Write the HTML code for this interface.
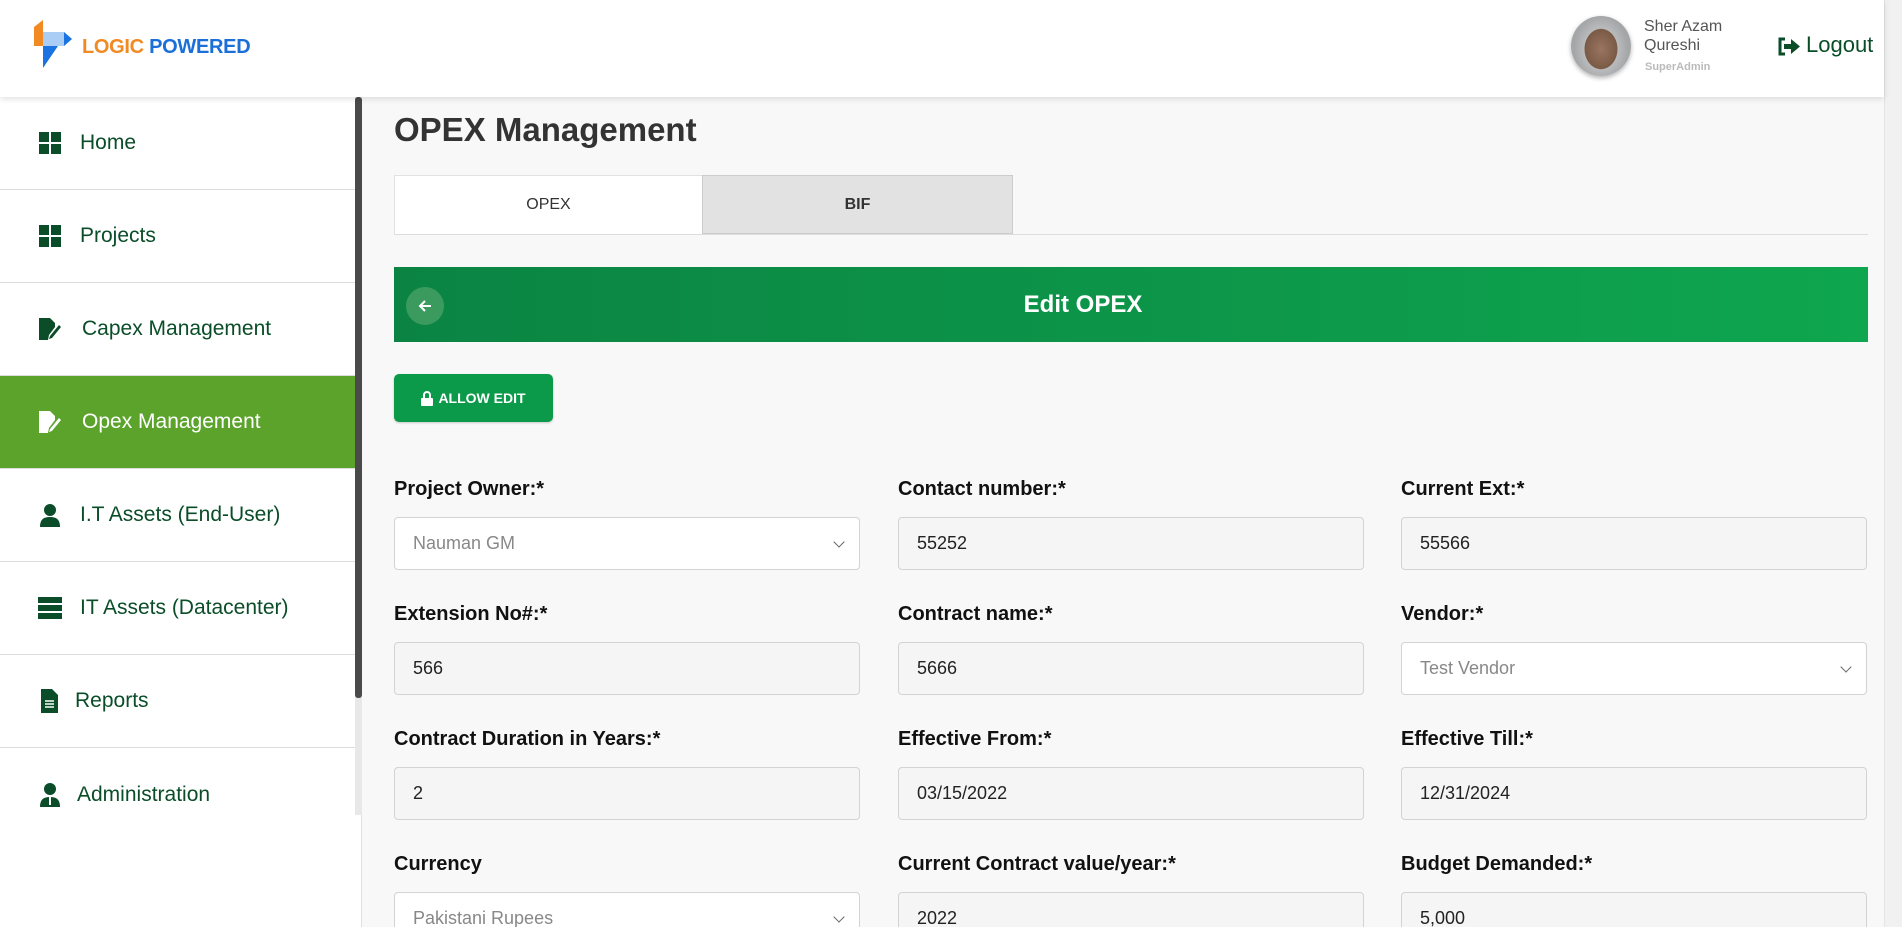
<!DOCTYPE html>
<html><head><meta charset="utf-8"><style>
*{box-sizing:border-box;margin:0;padding:0}
html,body{width:1902px;height:927px;overflow:hidden}
body{background:#f8f8f8;font-family:"Liberation Sans",sans-serif;position:relative}
.hdr{position:absolute;left:0;top:0;width:1884px;height:97px;background:#fff;box-shadow:0 2px 6px rgba(0,0,0,.12);z-index:2}
.vs{position:absolute;right:0;top:0;width:18px;height:927px;background:#f1f1f1;border-left:1px solid #e4e4e4}
.side{position:absolute;left:0;top:97px;width:362px;height:830px;background:#fff;border-right:1px solid #e0e0e0}
.item{position:absolute;left:0;width:355px;height:93px;border-bottom:1px solid #dcdcdc;color:#0a4d28;font-size:21px;display:flex;align-items:center}
.item .ic{position:absolute;left:38px;width:24px;height:24px}
.item span{position:absolute;left:80px}
.item.act{background:#5ba32b;color:#fff}
.sb{position:absolute;left:355px;top:97px;width:7px;height:718px;background:#e8e8e8}
.sbt{position:absolute;left:355px;top:97px;width:7px;height:601px;background:#4a4a4a;border-radius:3px}
h1{position:absolute;left:394px;top:111px;font-size:33px;font-weight:bold;color:#333}
.tabs{position:absolute;left:394px;top:175px;width:1474px;height:60px;border-bottom:1px solid #ddd}
.tab{position:absolute;top:0;height:59px;width:309px;font-size:16px;display:flex;align-items:center;justify-content:center;color:#333}
.ban{position:absolute;left:394px;top:267px;width:1474px;height:75px;background:linear-gradient(90deg,#0b8443,#0ea64f);color:#fff;font-size:24px;font-weight:bold;display:flex;align-items:center;justify-content:center;padding-right:96px}
.back{position:absolute;left:12px;top:20px;width:38px;height:38px;border-radius:50%;background:#3b9b5f;display:flex;align-items:center;justify-content:center}
.btn{position:absolute;left:394px;top:374px;width:159px;height:48px;background:#0b9a4a;border-radius:5px;color:#fff;font-size:14px;font-weight:bold;display:flex;align-items:center;justify-content:center;box-shadow:0 1px 2px rgba(0,0,0,.2)}
.lb{position:absolute;font-size:20px;color:#111;font-weight:600}
.in{position:absolute;width:466px;height:53px;border:1px solid #d3d3d3;border-radius:4px;background:#f5f5f5;font-size:18px;color:#222;padding-left:18px;display:flex;align-items:center}
.in.sel{background:#fff;color:#888}
.in.sel:after{content:"";position:absolute;right:16px;top:20px;width:7px;height:7px;border-right:1.5px solid #666;border-bottom:1.5px solid #666;transform:rotate(45deg)}
</style></head><body>
<div class="hdr">
 <svg style="position:absolute;left:34px;top:20px" width="40" height="50" viewBox="0 0 40 50"><path d="M0 7 L9 0 L9 26 L0 26Z" fill="#f28a24"/><path d="M9 12 L30 12 L38 19 L30 26 L9 26Z" fill="#a9cdf4"/><path d="M9 26 L24 26 L9 48Z" fill="#1a73e0"/><path d="M30 12 L38 19 L30 26Z" fill="#1a73e0"/></svg>
 <div style="position:absolute;left:82px;top:36px;font-size:20px;font-weight:bold;letter-spacing:-.3px"><span style="color:#f28a24">LOGIC</span> <span style="color:#1a6fd8">POWERED</span></div>
 <div style="position:absolute;left:1571px;top:16px;width:60px;height:60px;border-radius:50%;background:radial-gradient(ellipse 45% 55% at 50% 55%,#9a7560 0,#7a5a46 60%,#b9bbbd 62%,#a4a6a8 100%);box-shadow:0 2px 5px rgba(0,0,0,.3)"></div>
 <div style="position:absolute;left:1644px;top:17px;font-size:16px;color:#555;line-height:19px">Sher Azam<br>Qureshi</div>
 <div style="position:absolute;left:1645px;top:61px;font-size:11px;color:#bbb;font-weight:bold">SuperAdmin</div>
 <svg style="position:absolute;left:1777px;top:37px" width="24" height="19" viewBox="0 0 24 19"><path d="M8 2 H3 V17 H8" stroke="#0a4d28" stroke-width="3" fill="none"/><path d="M7 7 H14 V2 L23 9.5 L14 17 V12 H7Z" fill="#0a4d28"/></svg>
 <div style="position:absolute;left:1806px;top:32px;font-size:22px;color:#0a4d28">Logout</div>
</div>
<div class="side">
 <div class="item" style="top:0"><svg class="ic" viewBox="0 0 24 24"><path d="M1 1h10v10H1zM13 1h10v10H13zM1 13h10v10H1zM13 13h10v10H13z" fill="#0a4d28"/></svg><span>Home</span></div>
 <div class="item" style="top:93px"><svg class="ic" viewBox="0 0 24 24"><path d="M1 1h10v10H1zM13 1h10v10H13zM1 13h10v10H1zM13 13h10v10H13z" fill="#0a4d28"/></svg><span>Projects</span></div>
 <div class="item" style="top:186px"><svg class="ic" viewBox="0 0 24 24"><path d="M1 1h11l5 5v4l-6 8-1 5H1z" fill="#0a4d28"/><path d="M12 19l9-11 2 2-9 11-3 1z" fill="#0a4d28"/></svg><span style="left:82px">Capex Management</span></div>
 <div class="item act" style="top:279px"><svg class="ic" viewBox="0 0 24 24"><path d="M1 1h11l5 5v4l-6 8-1 5H1z" fill="#fff"/><path d="M12 19l9-11 2 2-9 11-3 1z" fill="#fff"/></svg><span style="left:82px">Opex Management</span></div>
 <div class="item" style="top:372px"><svg class="ic" viewBox="0 0 24 24"><circle cx="12" cy="7" r="6" fill="#0a4d28"/><path d="M2 24c0-8 4-10 10-10s10 2 10 10z" fill="#0a4d28"/></svg><span>I.T Assets (End-User)</span></div>
 <div class="item" style="top:465px"><svg class="ic" viewBox="0 0 24 24"><path d="M0 1h24v6H0zM0 9h24v6H0zM0 17h24v6H0z" fill="#0a4d28"/></svg><span>IT Assets (Datacenter)</span></div>
 <div class="item" style="top:558px"><svg class="ic" viewBox="0 0 24 24"><path d="M3 0h11l6 6v18H3z" fill="#0a4d28"/><path d="M7 12h9M7 15h9M7 18h9" stroke="#fff" stroke-width="1.5"/></svg><span style="left:75px">Reports</span></div>
 <div class="item" style="top:651px;border-bottom:none"><svg class="ic" viewBox="0 0 24 24"><circle cx="12" cy="6" r="6" fill="#0a4d28"/><path d="M2 24c0-8 4-10 10-10s10 2 10 10z" fill="#0a4d28"/><path d="M11 14h2v8h-2z" fill="#fff"/></svg><span style="left:77px">Administration</span></div>
</div>
<div class="sb"></div><div class="sbt"></div>
<h1>OPEX Management</h1>
<div class="tabs">
 <div class="tab" style="left:0;background:#fff;border:1px solid #e2e2e2;border-bottom:none">OPEX</div>
 <div class="tab" style="left:308px;width:311px;background:#e2e2e2;border:1px solid #ccc;font-weight:bold">BIF</div>
</div>
<div class="ban"><div class="back"><svg width="14" height="14" viewBox="0 0 14 14"><path d="M13 7H2M7 2L2 7l5 5" stroke="#fff" stroke-width="2" fill="none"/></svg></div>Edit OPEX</div>
<div class="btn"><svg width="12" height="15" viewBox="0 0 12 15" style="margin-right:5px"><path d="M3 7V4a3 3 0 016 0v3" stroke="#fff" stroke-width="2" fill="none"/><rect x="0" y="7" width="12" height="8" rx="1" fill="#fff"/></svg>ALLOW EDIT</div>

<div class="lb" style="left:394px;top:478px">Project Owner:*</div>
<div class="lb" style="left:898px;top:478px">Contact number:*</div>
<div class="lb" style="left:1401px;top:478px">Current Ext:*</div>
<div class="in sel" style="left:394px;top:517px">Nauman GM</div>
<div class="in" style="left:898px;top:517px">55252</div>
<div class="in" style="left:1401px;top:517px">55566</div>

<div class="lb" style="left:394px;top:603px">Extension No#:*</div>
<div class="lb" style="left:898px;top:603px">Contract name:*</div>
<div class="lb" style="left:1401px;top:603px">Vendor:*</div>
<div class="in" style="left:394px;top:642px">566</div>
<div class="in" style="left:898px;top:642px">5666</div>
<div class="in sel" style="left:1401px;top:642px">Test Vendor</div>

<div class="lb" style="left:394px;top:728px">Contract Duration in Years:*</div>
<div class="lb" style="left:898px;top:728px">Effective From:*</div>
<div class="lb" style="left:1401px;top:728px">Effective Till:*</div>
<div class="in" style="left:394px;top:767px">2</div>
<div class="in" style="left:898px;top:767px">03/15/2022</div>
<div class="in" style="left:1401px;top:767px">12/31/2024</div>

<div class="lb" style="left:394px;top:853px">Currency</div>
<div class="lb" style="left:898px;top:853px">Current Contract value/year:*</div>
<div class="lb" style="left:1401px;top:853px">Budget Demanded:*</div>
<div class="in sel" style="left:394px;top:892px">Pakistani Rupees</div>
<div class="in" style="left:898px;top:892px">2022</div>
<div class="in" style="left:1401px;top:892px">5,000</div>
<div class="vs"></div>
</body></html>
